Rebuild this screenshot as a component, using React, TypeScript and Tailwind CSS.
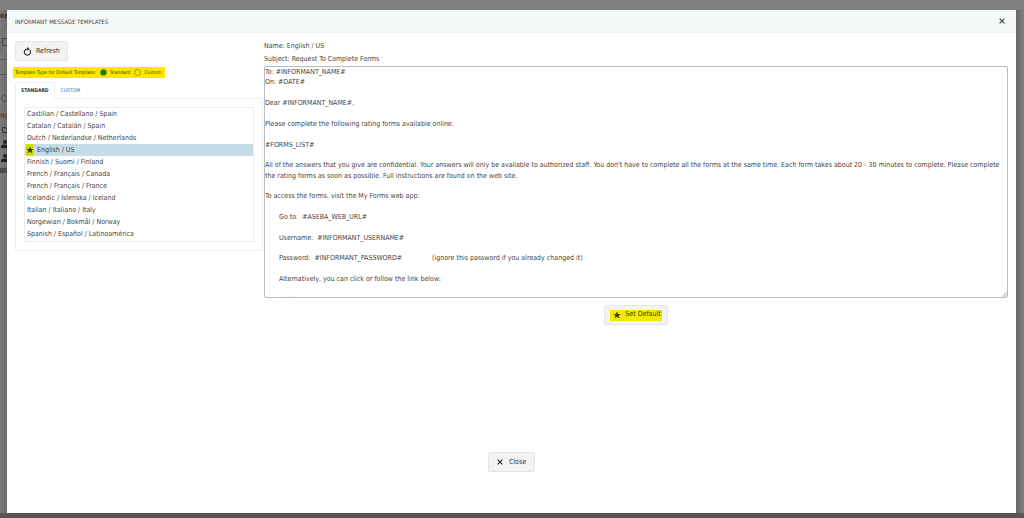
import { useState } from "react";

const languages = [
  "Castilian / Castellano / Spain",
  "Catalan / Catalán / Spain",
  "Dutch / Nederlandse / Netherlands",
  "English / US",
  "Finnish / Suomi / Finland",
  "French / Français / Canada",
  "French / Français / France",
  "Icelandic / Íslenska / Iceland",
  "Italian / Italiano / Italy",
  "Norgewian / Bokmål / Norway",
  "Spanish / Español / Latinoamérica",
];

const message = `To: #INFORMANT_NAME#
On: #DATE#

Dear #INFORMANT_NAME#,

Please complete the following rating forms available online:

#FORMS_LIST#

All of the answers that you give are confidential. Your answers will only be available to authorized staff. You don't have to complete all the forms at the same time. Each form takes about 20 - 30 minutes to complete. Please complete the rating forms as soon as possible. Full instructions are found on the web site.

To access the forms, visit the My Forms web app:

       Go to:  #ASEBA_WEB_URL#

       Username:  #INFORMANT_USERNAME#

       Password:  #INFORMANT_PASSWORD#               (ignore this password if you already changed it)

       Alternatively, you can click or follow the link below:

       #SIGN_IN_WITH_LINK#
`;

function Star() {
  return (
    <svg viewBox="0 0 24 24" className="size-2 shrink-0 fill-current" aria-hidden="true">
      <path d="M12 1l3 8h8.500l-6.800 5.200L19.200 22.500 12 17.500l-7.200 5 2.500-8.300L.5 9H9z" />
    </svg>
  );
}

function Cross() {
  return (
    <svg viewBox="0 0 10 10" className="size-[6px] shrink-0 stroke-current" strokeWidth="2" aria-hidden="true">
      <path d="M1 1l8 8M9 1L1 9" />
    </svg>
  );
}

function RefreshIcon() {
  return (
    <svg viewBox="0 0 16 16" className="size-[9px] shrink-0" aria-hidden="true">
      <path d="M12.200 5.500A5.500 5.500 0 1 1 8 3.500" fill="none" stroke="currentColor" strokeWidth="2" />
      <path d="M7.500 0l4.500 3.500-4.500 3.500z" fill="currentColor" />
    </svg>
  );
}

function Person() {
  return (
    <svg viewBox="0 0 8 8" className="size-2 shrink-0 fill-[#222]" aria-hidden="true">
      <circle cx="5" cy="2" r="2" />
      <path d="M1 8V6.500Q1 4.500 5 4.500T8 6.500V8z" />
    </svg>
  );
}

function PageEdge() {
  return (
    <div className="flex w-[7px] shrink-0 flex-col overflow-hidden bg-gradient-to-r from-[#7c7c7c] to-[#6b6b6b] text-[#333]" aria-hidden="true">
      <div className="h-3 shrink-0 text-[6px] leading-3 font-bold">RE</div>
      <div className="mt-2 flex h-6 shrink-0 items-center bg-[#757575]">
        <svg viewBox="0 0 6 8" className="ml-[2px] h-2 w-[6px] shrink-0 fill-none stroke-[#444]">
          <path d="M6 .5H.5v7H6" />
        </svg>
      </div>
      <div className="h-[6px] shrink-0 border-b border-[#555]" />
      <div className="h-[15px] shrink-0 border-b border-[#555]" />
      <div className="mt-5 ml-px size-[7px] shrink-0 rounded-full border border-[#505050]" />
      <div className="mt-2 h-3 shrink-0 text-[7px] leading-3">Ro</div>
      <svg viewBox="0 0 8 8" className="mt-1 ml-[2px] size-2 shrink-0 fill-none stroke-[#333]">
        <path d="M.5 7V1.500h3l1 1.500H8M.5 6.500H8" />
      </svg>
      <div className="mt-[6px] flex flex-col gap-[6px]">
        <Person />
        <Person />
      </div>
      <div className="mt-[6px] h-[5px] shrink-0 bg-[#4b4b4b]" />
    </div>
  );
}

const button =
  "flex items-center rounded-xs border border-[#e6e6e6] bg-[#f3f3f3] text-[7px] text-[#333]";

export default function App() {
  const [selected, setSelected] = useState(3);
  const [kind, setKind] = useState("Standard");
  const [tab, setTab] = useState("Standard");

  return (
    <div className="flex min-h-screen flex-col bg-[#7f7f7f] font-['DejaVu_Sans_Condensed','Noto_Sans',sans-serif] text-[#444]">
      <div className="h-[10px] shrink-0" />
      <div className="flex grow">
        <PageEdge />
        <main role="dialog" aria-labelledby="title" className="flex min-w-0 grow flex-col bg-white">
          <header className="flex h-[23px] items-center justify-between border-b border-[#eef2f2] bg-[#f4f8f9] pr-[11px] pl-2">
            <h1 id="title" className="text-[6px]">INFORMANT MESSAGE TEMPLATES</h1>
            <button type="button" aria-label="Close dialog" className="text-[#444]">
              <Cross />
            </button>
          </header>

          <div className="flex gap-px pr-2 pl-2">
            <aside className="w-[248px] shrink-0 pt-2">
              <button type="button" className={`${button} h-5 gap-1 px-[7px]`}>
                <RefreshIcon />
                Refresh
              </button>

              <div
                role="radiogroup"
                aria-labelledby="kind-label"
                className="mt-[6px] -ml-[2px] flex h-[11px] w-[152px] items-center bg-[#ffe600] pl-[2px] text-[5px] whitespace-nowrap text-[#3c3c10]"
              >
                <span id="kind-label">Template Type for Default Template:</span>
                {["Standard", "Custom"].map((name) => (
                  <label key={name} className="ml-1 flex items-center gap-[3px]">
                    <input
                      type="radio"
                      name="kind"
                      checked={kind === name}
                      onChange={() => setKind(name)}
                      className="size-[7px] appearance-none rounded-full border border-[#a09600] checked:border-[#5f9a00] checked:bg-[#107c00]"
                    />
                    {name}
                  </label>
                ))}
              </div>

              <div role="tablist" className="mt-1 flex h-[17px] items-stretch text-[5px]">
                {["Standard", "Custom"].map((name) => (
                  <button
                    key={name}
                    type="button"
                    role="tab"
                    aria-selected={tab === name}
                    onClick={() => setTab(name)}
                    className="rounded-t-xs border border-transparent border-b-[#eaf0f0] px-[5px] text-[#1a7bbd] uppercase aria-selected:border-[#eaf0f0] aria-selected:border-b-white aria-selected:font-bold aria-selected:text-[#333]"
                  >
                    {name}
                  </button>
                ))}
                <div className="grow border-b border-[#eaf0f0]" />
              </div>
              <div role="tabpanel" className="rounded-b-xs border border-t-0 border-[#eaf0f0] px-2 pt-2 pb-2">
                <ul role="listbox" aria-label="Languages" className="border border-[#ececec] pb-px">
                  {languages.map((name, i) => (
                    <li
                      key={name}
                      role="option"
                      aria-selected={selected === i}
                      onClick={() => setSelected(i)}
                      className="flex h-3 items-center px-[2px] text-[7px] aria-selected:bg-[#c5dbe8] aria-selected:pl-px"
                    >
                      {i === 3 && (
                        <span className="mr-[3px] flex h-3 items-center bg-[#d6e000] text-[#3a4200]">
                          <Star />
                        </span>
                      )}
                      {name}
                    </li>
                  ))}
                </ul>
              </div>
            </aside>

            <section className="flex min-w-0 grow flex-col items-center pt-[7px]">
              <div className="w-full text-[7px] leading-[13px]">
                <p>Name: English / US</p>
                <p>Subject: Request To Complete Forms</p>
              </div>
              <div className="relative w-full">
                <textarea
                  aria-label="Message"
                  defaultValue={message}
                  className="block h-[232px] w-full resize-none overflow-hidden rounded-xs border border-[#b9bdbd] text-[7px] leading-[1.48]"
                />
                <svg viewBox="0 0 6 6" className="pointer-events-none absolute right-px bottom-px size-[5px] stroke-[#999]" aria-hidden="true">
                  <path d="M0 6L6 0M3 6L6 3" />
                </svg>
              </div>
              <button type="button" className={`${button} mt-[7px] h-5 px-[5px]`}>
                <span className="flex h-[11px] items-center gap-1 bg-[#f5e800] pr-px pb-px pl-[3px] text-[#3c3c10]">
                  <Star />
                  Set Default
                </span>
              </button>
            </section>
          </div>

          <footer className="mt-auto flex justify-center pb-[41px]">
            <button type="button" className={`${button} h-5 gap-[6px] px-2`}>
              <Cross />
              Close
            </button>
          </footer>
        </main>
        <div className="w-2 shrink-0 bg-gradient-to-r from-[#686868] to-[#7f7f7f]" />
      </div>
      <div className="h-[5px] shrink-0 bg-[#565656]" />
    </div>
  );
}
